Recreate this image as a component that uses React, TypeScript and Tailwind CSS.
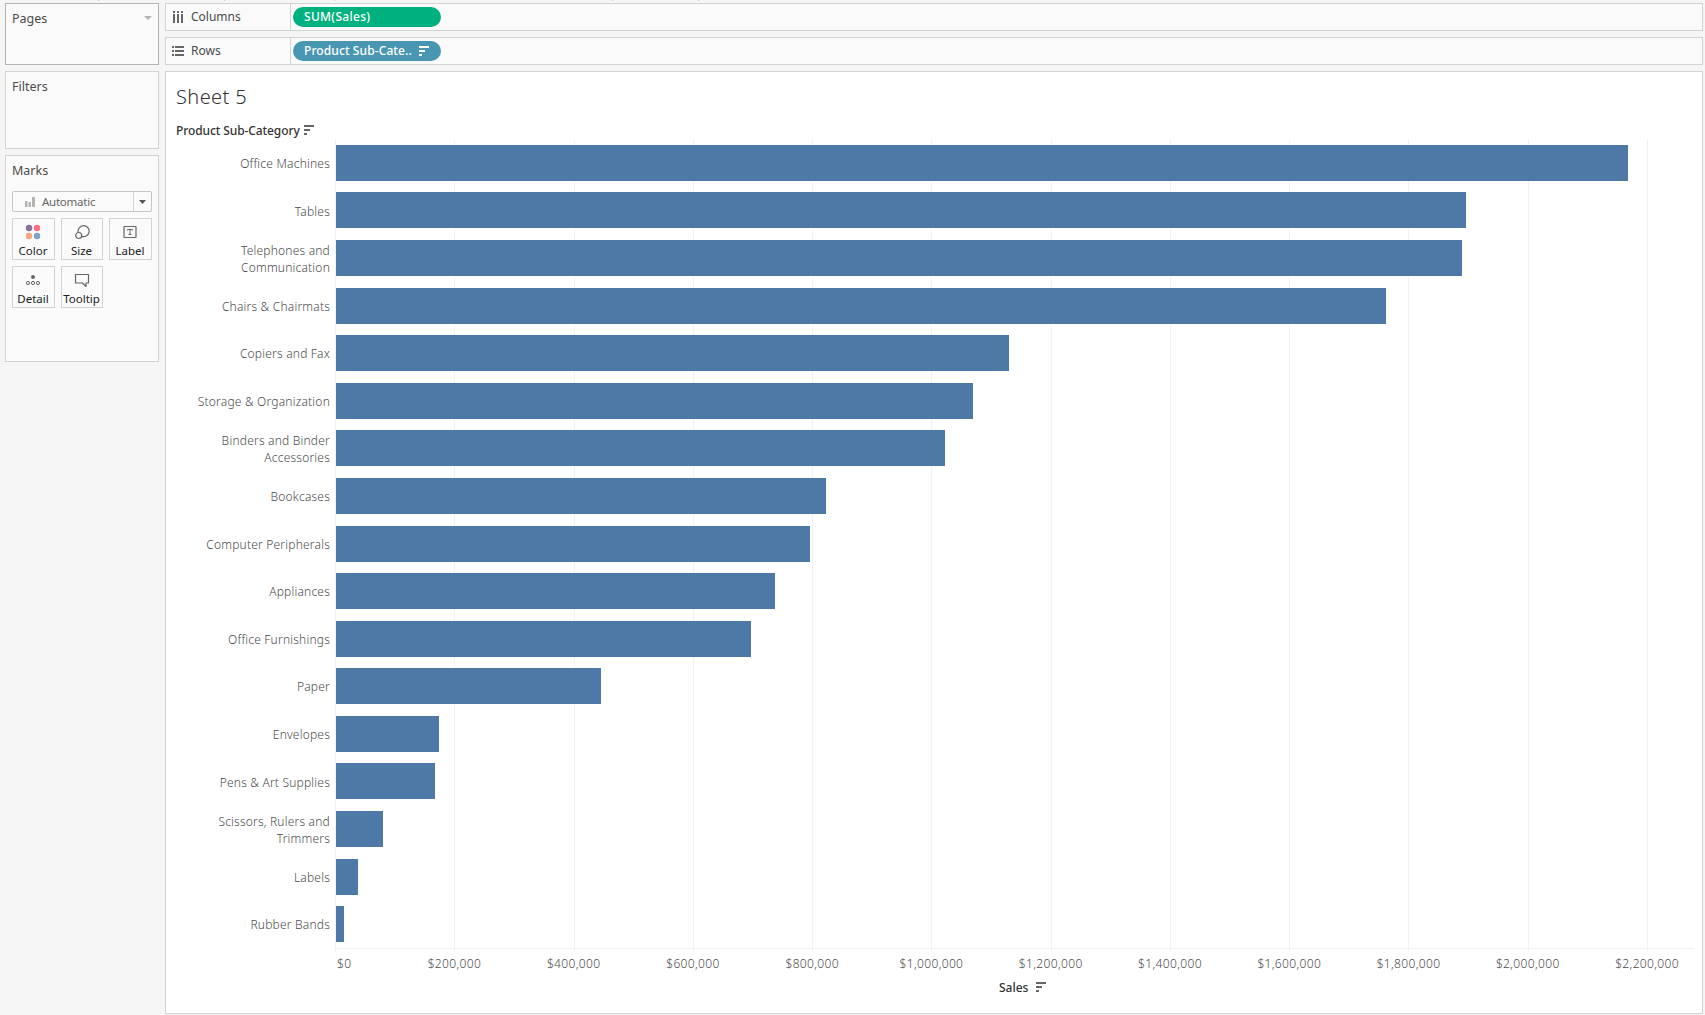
import React from 'react';

interface Category {
  lines: string[];
  width: number;
}

const categories: Category[] = [
  { lines: ['Office Machines'], width: 1292 },
  { lines: ['Tables'], width: 1130 },
  { lines: ['Telephones and', 'Communication'], width: 1126 },
  { lines: ['Chairs & Chairmats'], width: 1050 },
  { lines: ['Copiers and Fax'], width: 673 },
  { lines: ['Storage & Organization'], width: 637 },
  { lines: ['Binders and Binder', 'Accessories'], width: 609 },
  { lines: ['Bookcases'], width: 490 },
  { lines: ['Computer Peripherals'], width: 474 },
  { lines: ['Appliances'], width: 439 },
  { lines: ['Office Furnishings'], width: 415 },
  { lines: ['Paper'], width: 265 },
  { lines: ['Envelopes'], width: 103 },
  { lines: ['Pens & Art Supplies'], width: 99 },
  { lines: ['Scissors, Rulers and', 'Trimmers'], width: 47 },
  { lines: ['Labels'], width: 22 },
  { lines: ['Rubber Bands'], width: 8 },
];

const ticks = ['$0', '$200,000', '$400,000', '$600,000', '$800,000', '$1,000,000', '$1,200,000', '$1,400,000', '$1,600,000', '$1,800,000', '$2,000,000', '$2,200,000'];
const TICK_STEP = 119.27;

const SortIcon: React.FC<{ className?: string }> = ({ className = '' }) => (
  <svg width="10" height="10" viewBox="0 0 10 10" fill="currentColor" className={className} shapeRendering="crispEdges">
    <path d="M0 0h10v2H0zM0 4h6v2H0zM0 8h3v2H0z" />
  </svg>
);

const Shelf: React.FC<{ label: string; icon: React.ReactNode; children: React.ReactNode }> = ({ label, icon, children }) => (
  <div className="flex h-7 border border-[#d3d3d3] bg-[#fafafa]">
    <div className="flex w-[125px] items-center border-r border-[#d3d3d3] pl-1.5">
      {icon}
      <span className="ml-[7px] text-[12px] leading-4 text-[#4b4b4b]">{label}</span>
    </div>
    <div className="flex items-center pl-0.5">{children}</div>
  </div>
);

const MarkButton: React.FC<{ label: string; children: React.ReactNode }> = ({ label, children }) => (
  <div className="flex h-[42px] flex-col items-center border border-[#d3d3d3] bg-[#fafafa] pt-[5px] pr-px text-[#666]">
    <svg width="16" height="16" viewBox="0 0 16 16" fill="none" stroke="currentColor">
      {children}
    </svg>
    <span className="mt-[3px] text-[11.5px] leading-4 text-[#222]">{label}</span>
  </div>
);

const Sidebar = () => (
  <aside className="flex w-[154px] flex-col gap-1.5 text-[12.5px] leading-4 text-[#4b4b4b]">
    <div className="flex h-[62px] items-start justify-between border border-[#b3b3b3] bg-[#fafafa] pt-[7px] pr-1.5 pl-1.5">
      <span>Pages</span>
      <svg width="8" height="4" viewBox="0 0 8 4" fill="#b3b3b3" className="mt-[5px]">
        <path d="M0 0h8L4 4z" />
      </svg>
    </div>
    <div className="h-[78px] border border-[#d3d3d3] bg-[#fafafa] px-1.5 pt-[7px]">Filters</div>
    <div className="h-[207px] border border-[#d3d3d3] bg-[#fafafa] px-1.5 pt-[7px]">
      <div>Marks</div>
      <div className="mt-3 flex h-[21px] items-center rounded-xs border border-[#c6c6c6] bg-[#fafafa]">
        <svg width="10" height="10" viewBox="0 0 10 10" className="ml-3" fill="#b4b4b4">
          <path d="M0 4h2.500v6H0zM3.500 5h2.500v5h-2.500zM7 0h3v10H7z" />
        </svg>
        <span className="ml-[7px] flex-1 text-[11.5px] tracking-[-0.25px] text-[#666]">Automatic</span>
        <span className="flex h-full w-[18px] items-center justify-center border-l border-[#d3d3d3]">
          <svg width="7" height="4" viewBox="0 0 7 4" fill="#555">
            <path d="M0 0h7L3.500 4z" />
          </svg>
        </span>
      </div>
      <div className="mt-1.5 grid grid-cols-[43px_42px_43px] gap-x-1.5 gap-y-1.5">
        <MarkButton label="Color">
          <g stroke="none">
            <circle cx="4" cy="4" r="3.200" fill="#86709a" />
            <circle cx="12" cy="4" r="3.200" fill="#fb6f83" />
            <circle cx="4" cy="12" r="3.200" fill="#f6a77c" />
            <circle cx="12" cy="12" r="3.200" fill="#7ea3cf" />
          </g>
        </MarkButton>
        <MarkButton label="Size">
          <path d="M4.300 8.500A5.500 5.500 0 1 1 7.500 12.200" strokeWidth="1.200" />
          <circle cx="4.700" cy="11.500" r="3" strokeWidth="1.200" />
        </MarkButton>
        <MarkButton label="Label">
          <rect x="2" y="2.500" width="12" height="11" rx="0.500" strokeWidth="1.200" />
          <path d="M5.500 6.500V5.500h5v1M8 5.500v5M6.500 10.500h3" />
        </MarkButton>
        <MarkButton label="Detail">
          <circle cx="8" cy="5" r="2" fill="currentColor" stroke="none" />
          <circle cx="3" cy="11" r="1.600" />
          <circle cx="8" cy="11" r="1.600" />
          <circle cx="13" cy="11" r="1.600" />
        </MarkButton>
        <MarkButton label="Tooltip">
          <path d="M1.500 2.500h13v8.500h-2.500v3.500l-3.500-3.500h-7z" strokeWidth="1.200" strokeLinejoin="round" />
        </MarkButton>
      </div>
    </div>
  </aside>
);

const Chart = () => (
  <div className="relative">
    {/* gridlines sit behind the bars */}
    <svg width="1360" height="813" className="absolute top-0 left-[159px]" shapeRendering="crispEdges" fill="#f2f2f2">
      {ticks.map((tick, i) => (
        <rect key={tick} x={Math.round(i * TICK_STEP)} y="0" width="1" height="813" />
      ))}
      <rect x="0" y="809" width="1359" height="1" />
    </svg>
    <div className="relative pt-[0.11px]">
      {categories.map((category) => (
        <div key={category.lines[0]} className="flex h-[47.59px] items-center">
          <div className="w-[154px] pt-[1.3px] text-right text-[12px] leading-[17px] font-light tracking-[0.2px] whitespace-nowrap text-[#4b4b4b]">
            {category.lines.map((line) => (
              <div key={line}>{line}</div>
            ))}
          </div>
          <div className="ml-1.5 h-9 bg-[#4e79a7]" style={{ width: category.width }} />
        </div>
      ))}
    </div>
    <div className="mt-2 flex h-4 pl-[99.5px] text-[12px] leading-4 font-light tracking-[0.35px] text-[#4b4b4b]">
      {ticks.map((tick, i) => (
        <span key={tick} className={i === 0 ? 'w-[119.27px] shrink-0 pl-[61.5px]' : 'w-[119.27px] shrink-0 text-center'}>
          {tick}
        </span>
      ))}
    </div>
    <div className="mt-2 flex items-center pl-[823px] text-[12px] leading-4 font-medium text-[#333]">
      Sales
      <SortIcon className="-mt-0.5 ml-2 text-[#666]" />
    </div>
  </div>
);

// bottom ends of the toolbar separators above the shelves
const ToolbarEdge = () => (
  <div className="flex h-[3px] pl-[98px]">
    <i className="mr-[125px] h-px w-px bg-[#c8c8c8]" />
    <i className="mr-[109px] h-px w-px bg-[#c8c8c8]" />
    <i className="mr-[277px] h-px w-px bg-[#c8c8c8]" />
    <i className="mr-[85px] h-px w-px bg-[#c8c8c8]" />
    <i className="h-px w-px bg-[#c8c8c8]" />
  </div>
);

const App = () => (
  <div className="h-[1015px] w-[1705px] overflow-hidden bg-[#f5f5f5] font-['Noto_Sans',sans-serif]">
    <ToolbarEdge />
    <div className="flex gap-1.5 pl-[5px]">
      <Sidebar />
      <main className="flex w-[1538px] flex-col gap-1.5">
        <Shelf
          label="Columns"
          icon={
            <svg width="12" height="12" viewBox="0 0 12 12" fill="#666" shapeRendering="crispEdges">
              <path d="M1 0h2v2H1zM5 0h2v2H5zM9 0h2v2H9zM1 3h2v9H1zM5 3h2v9H5zM9 3h2v9H9z" />
            </svg>
          }
        >
          <div className="flex h-5 w-[148px] items-center rounded-full bg-[#00b180] pl-[11px] text-[12px] font-medium tracking-[0.3px] text-white">
            SUM(Sales)
          </div>
        </Shelf>
        <Shelf
          label="Rows"
          icon={
            <svg width="12" height="10" viewBox="0 0 12 10" fill="#666" shapeRendering="crispEdges">
              <path d="M0 0h2v2H0zM3 0h9v2H3zM0 4h2v2H0zM3 4h9v2H3zM0 8h2v2H0zM3 8h9v2H3z" />
            </svg>
          }
        >
          <div className="flex h-5 w-[148px] items-center rounded-full bg-[#4996b2] pl-[11px] text-[12px] font-medium tracking-[0.1px] text-white">
            <span className="w-[115px]">Product Sub-Cate..</span>
            <SortIcon />
          </div>
        </Shelf>
        <section className="h-[943px] border border-[#d3d3d3] bg-white pl-[10px]">
          <h1 className="pt-3 text-[20px] leading-[26px] font-light tracking-[0.4px] text-[#333]">Sheet 5</h1>
          <div className="mt-[13px] flex h-4 items-center text-[12px] leading-4 font-medium tracking-[-0.1px] text-[#333]">
            Product Sub-Category
            <SortIcon className="-mt-0.5 ml-1 text-[#666]" />
          </div>
          <Chart />
        </section>
      </main>
    </div>
  </div>
);

export default App;
